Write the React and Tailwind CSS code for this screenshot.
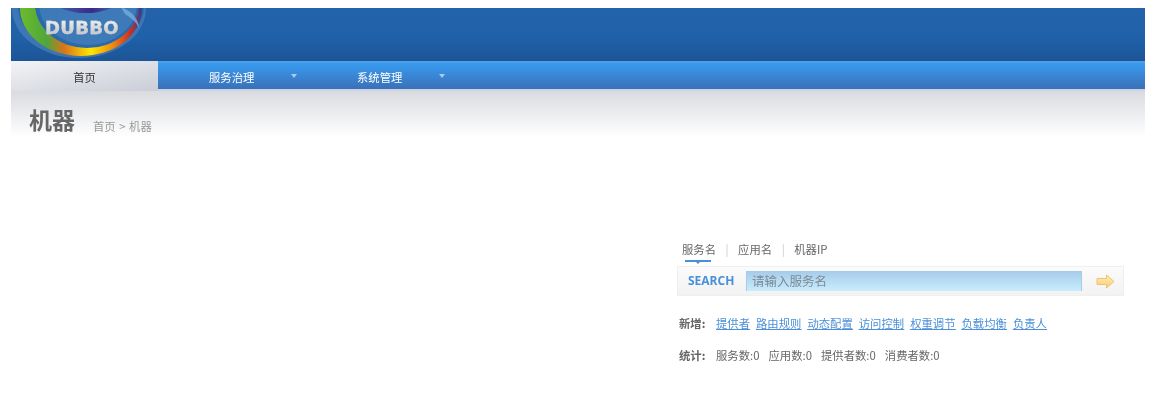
const cjk = '"Noto Sans CJK SC", sans-serif';

const addLinks = ['提供者', '路由规则', '动态配置', '访问控制', '权重调节', '负载均衡', '负责人'];
const stats = ['服务数:0', '应用数:0', '提供者数:0', '消费者数:0'];

function Logo() {
  return (
    <div className="absolute left-0 top-0 h-[53px] w-[150px]">
      <svg width="150" height="53" viewBox="0 0 150 53" className="block">
        <defs>
          <linearGradient id="ring" x1="0" y1="0" x2="1" y2="0">
            <stop offset="0" stopColor="#6dbb2c" />
            <stop offset="0.22" stopColor="#4fa63c" />
            <stop offset="0.36" stopColor="#d9741a" />
            <stop offset="0.58" stopColor="#ffe600" />
            <stop offset="0.76" stopColor="#ee8a10" />
            <stop offset="0.9" stopColor="#d0301c" />
            <stop offset="1" stopColor="#2a3f98" />
          </linearGradient>
          <linearGradient id="cap" x1="0" y1="0" x2="1" y2="0">
            <stop offset="0" stopColor="#3b2a8c" stopOpacity="0.3" />
            <stop offset="0.6" stopColor="#3b2a8c" />
            <stop offset="1" stopColor="#3b2a8c" stopOpacity="0.2" />
          </linearGradient>
        </defs>
        <ellipse cx="68" cy="0" rx="67" ry="50" fill="#4c80b9" opacity="0.7" />
        <ellipse cx="70" cy="-2" rx="63" ry="47" fill="#2a66ab" />
        <ellipse cx="70" cy="0" rx="61" ry="48" fill="url(#ring)" />
        <ellipse cx="76" cy="-4" rx="52" ry="44" fill="#2b69ae" />
        <ellipse cx="77" cy="-4" rx="49" ry="41" fill="#3e7ab7" />
        <ellipse cx="75" cy="-6" rx="30" ry="11" fill="url(#cap)" />
        <path d="M110 -1 Q127 6 128 20 Q124 12 114 6 Z" fill="#74addf" opacity="0.8" />
      </svg>
      <span
        className="absolute left-[34px] top-[10px] bg-gradient-to-b from-[#f6f6f6] to-[#b8bcc1] bg-clip-text text-[18px] leading-[20px] font-bold tracking-[0.3px] text-transparent [-webkit-text-stroke:0.3px_#d4d6da]"
        style={{ fontFamily: '"DejaVu Sans", sans-serif' }}
      >
        DUBBO
      </span>
    </div>
  );
}

function Caret() {
  return <span className="ml-px h-0 w-0 border-x-[3px] border-t-[4px] border-x-transparent border-t-[#a9cdf0]" />;
}

function NavItem({ label, width }) {
  return (
    <div className={`flex items-center pl-[51px] text-white ${width}`}>
      <span className="w-[81px] pt-[3px]">{label}</span>
      <Caret />
    </div>
  );
}

export default function App() {
  return (
    <div
      className="min-h-[411px] bg-white pt-2 pr-4 pl-[11px] text-[11.35px] text-[#666] blur-[0.35px]"
      style={{ fontFamily: cjk }}
    >
      <div className="relative h-[53px] overflow-hidden bg-gradient-to-b from-[#2263ab] via-[#2062aa] to-[#1c5597]">
        <Logo />
      </div>

      <nav className="flex h-[30px] border-t-2 border-b-2 border-t-[#4f9fe6] border-b-[#c9d4e3] bg-gradient-to-b from-[#379cf1] to-[#3a70b8]">
        <div className="-mt-0.5 -mb-0.5 flex w-[147px] items-center justify-center bg-gradient-to-br from-[#f3f4f6] to-[#c9cdd6] pt-[3px] text-[#333]">
          首页
        </div>
        <NavItem label="服务治理" width="w-[148px]" />
        <NavItem label="系统管理" width="w-[148px]" />
      </nav>

      <div className="flex h-[46px] items-start bg-gradient-to-b from-[#d9dbe0] to-white pt-[13px] pl-[18px]">
        <h1 className="text-[23px] leading-[30px] font-bold text-[#666]">机器</h1>
        <p className="mt-[14px] ml-[18px] text-[#999] [word-spacing:1px]">首页 &gt; 机器</p>
      </div>

      <section className="mt-[104px] mr-[21px] ml-auto w-[447px]">
        <div className="flex items-center pl-[5px] leading-[17px]">
          <div className="relative">
            <span>服务名</span>
            <span className="absolute top-[19px] left-[3px] h-0.5 w-[26px] bg-[#4a90d9]" />
            <span className="absolute top-[21px] left-[14px] h-0 w-0 border-x-[2px] border-t-[2px] border-x-transparent border-t-[#4a90d9]" />
          </div>
          <span className="mx-[9.5px] text-[#ccc]">|</span>
          <span>应用名</span>
          <span className="mx-[9.5px] text-[#ccc]">|</span>
          <span>机器IP</span>
        </div>

        <div className="mt-2 flex h-[30px] items-center border border-[#efefef] bg-gradient-to-b from-[#fbfbfb] to-[#f2f2f2]">
          <span
            className="w-[68px] pl-[10px] text-[12px] font-bold text-[#4a90d9]"
            style={{ fontFamily: '"Open Sans", sans-serif' }}
          >
            SEARCH
          </span>
          <div className="flex h-5 w-[336px] items-center border-x border-x-[#a8cce6] bg-gradient-to-b from-[#a6cbe9] to-[#c9edfd] pl-[5px] text-[12.5px] text-[#7d8b96]">
            请输入服务名
          </div>
          <svg width="19" height="15" viewBox="0 0 19 15" className="ml-[14px]">
            <defs>
              <linearGradient id="go" x1="0" y1="0" x2="0" y2="1">
                <stop offset="0" stopColor="#fff2b0" />
                <stop offset="1" stopColor="#fdc878" />
              </linearGradient>
            </defs>
            <path
              d="M1 4.5H10.5V1L18 7.5 10.5 14V10.5H1Z"
              fill="url(#go)"
              stroke="#eec272"
              strokeWidth="1"
              strokeLinejoin="round"
            />
          </svg>
        </div>

        <div className="mt-[19px] flex pl-[2px] leading-[17px]">
          <span className="w-[37px] font-bold">新增:</span>
          <div className="flex gap-[6px] text-[#4a8fd8] underline">
            {addLinks.map((link) => (
              <a key={link} href="#">{link}</a>
            ))}
          </div>
        </div>

        <div className="mt-[15px] flex pl-[2px] leading-[17px]">
          <span className="w-[37px] font-bold">统计:</span>
          <div className="flex gap-[9px]">
            {stats.map((item) => (
              <span key={item}>{item}</span>
            ))}
          </div>
        </div>
      </section>
    </div>
  );
}
